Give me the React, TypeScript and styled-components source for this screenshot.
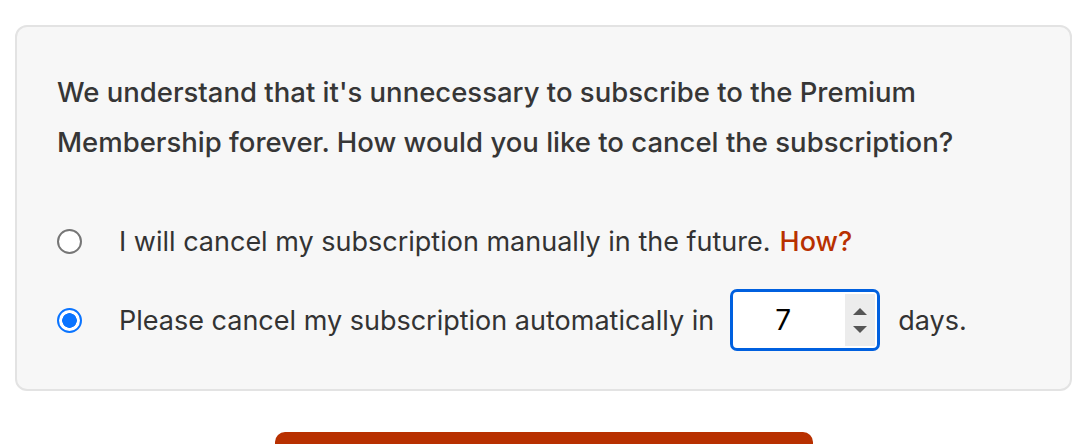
import React, { useState } from 'react'
import styled, { createGlobalStyle } from 'styled-components'

const GlobalStyle = createGlobalStyle`
    html, body {
        margin: 0;
        padding: 0;
        background: #ffffff;
    }
    body {
        font-family: Inter, "Noto Sans", "Liberation Sans", sans-serif;
        color: #333333;
    }
`

const Page = styled.div`
    padding: 25px 16px 0 15px;
    display: flex;
    flex-direction: column;
    align-items: center;
`

const Card = styled.div`
    box-sizing: border-box;
    width: 100%;
    background: #f7f7f7;
    border: 2px solid #e3e3e3;
    border-radius: 12px;
    padding: 40px 40px 38px 40px;
`

const Intro = styled.p`
    margin: 0 0 49px;
    font-size: 27.5px;
    line-height: 50px;
    font-weight: 500;
    color: #363636;
`

const Options = styled.div`
    display: flex;
    flex-direction: column;
    gap: 23px;
`

const Option = styled.label`
    display: flex;
    align-items: center;
    min-height: 50px;
    font-size: 27px;
    color: #333333;
    white-space: nowrap;
    cursor: pointer;
`

const Radio = styled.input.attrs({ type: 'radio' })`
    appearance: none;
    margin: 0 37px 0 0;
    width: 25px;
    height: 25px;
    flex: none;
    box-sizing: border-box;
    border-radius: 50%;
    border: 2px solid #767676;
    background: #ffffff;
    &:checked {
        border: 2px solid #0a74ff;
        background: radial-gradient(circle, #0a74ff 0 7px, #ffffff 7.6px);
    }
`

const Link = styled.a`
    margin-left: 9px;
    color: #b83000;
    font-weight: 500;
    text-decoration: none;
`

const NumberBox = styled.div`
    display: flex;
    align-items: stretch;
    box-sizing: border-box;
    width: 150px;
    height: 62px;
    margin: 0 18px 0 16px;
    border: 3px solid #0060df;
    border-radius: 7px;
    background: #ffffff;
    padding: 2px;
`

const NumberField = styled.input`
    flex: 1;
    min-width: 0;
    border: none;
    outline: none;
    background: transparent;
    font-family: inherit;
    font-size: 28px;
    color: #000000;
    text-align: center;
    padding: 0 14px 0 0;
    appearance: textfield;
    &::-webkit-inner-spin-button,
    &::-webkit-outer-spin-button {
        -webkit-appearance: none;
        margin: 0;
    }
`

const Spinner = styled.div`
    width: 30px;
    background: #ececec;
    display: flex;
    flex-direction: column;
    align-items: center;
    justify-content: center;
    gap: 11px;
`

const Arrow = styled.span<{ $down?: boolean }>`
    width: 0;
    height: 0;
    border-left: 7px solid transparent;
    border-right: 7px solid transparent;
    ${p => p.$down ? 'border-top: 7px solid #555555;' : 'border-bottom: 7px solid #555555;'}
`

const SubmitButton = styled.button`
    margin-top: 41px;
    width: 538px;
    height: 12px;
    border: none;
    border-radius: 10px 10px 0 0;
    background: #b83000;
`

export default function App() {
    const [mode, setMode] = useState('auto')
    const [days, setDays] = useState(7)

    const step = (delta: number) => setDays(d => Math.max(1, d + delta))

    return (
        <>
            <GlobalStyle />
            <Page>
                <Card>
                    <Intro>
                        We understand that it's unnecessary to subscribe to the Premium
                        <br />
                        Membership forever. How would you like to cancel the subscription?
                    </Intro>
                    <Options>
                        <Option>
                            <Radio name='cancel' checked={mode === 'manual'} onChange={() => setMode('manual')} />
                            I will cancel my subscription manually in the future.
                            <Link href='#'>How?</Link>
                        </Option>
                        <Option>
                            <Radio name='cancel' checked={mode === 'auto'} onChange={() => setMode('auto')} />
                            Please cancel my subscription automatically in
                            <NumberBox>
                                <NumberField
                                    type='number'
                                    value={days}
                                    onChange={e => setDays(Number(e.target.value))}
                                />
                                <Spinner>
                                    <Arrow onClick={() => step(1)} />
                                    <Arrow $down onClick={() => step(-1)} />
                                </Spinner>
                            </NumberBox>
                            days.
                        </Option>
                    </Options>
                </Card>
                <SubmitButton type='button' aria-label='Continue' />
            </Page>
        </>
    )
}
